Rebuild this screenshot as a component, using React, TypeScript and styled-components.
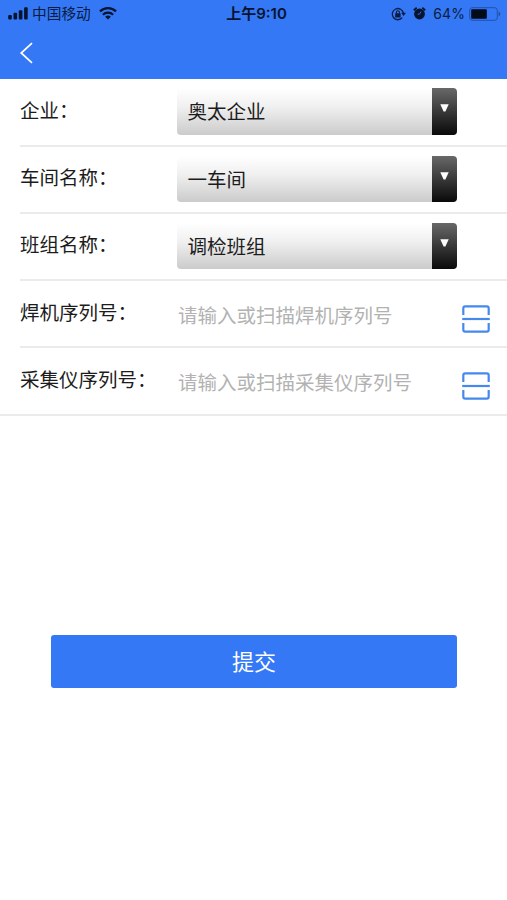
import React from 'react';
import styled, { createGlobalStyle } from 'styled-components';

const GlobalStyle = createGlobalStyle`
  * { box-sizing: border-box; }
  body {
    margin: 0;
    background: #fff;
    font-family: "Liberation Sans", "Noto Sans CJK SC", sans-serif;
    color: #1c1c1c;
  }
`;

const Screen = styled.main`
  display: flex;
  flex-direction: column;
  width: 507px;
  height: 900px;
  overflow: hidden;
  background: #fff;
`;

const Header = styled.header`
  height: 79px;
  flex: none;
  background: #3478f6;
`;

const StatusBar = styled.div`
  display: grid;
  grid-template-columns: 1fr auto 1fr;
  align-items: center;
  height: 27px;
  padding: 0 6px 0 8px;
  color: #0a1c42;
  font-family: Inter, "Noto Sans CJK SC", sans-serif;
  font-size: 14.7px;
  line-height: 27px;
`;

const StatusGroup = styled.div<{ $end?: boolean }>`
  display: flex;
  align-items: center;
  justify-content: ${(p) => (p.$end ? 'flex-end' : 'flex-start')};
  white-space: nowrap;

  svg { flex: none; display: block; }
`;

const Carrier = styled.span`
  margin: 0 8px 0 4px;
  padding-top: 2px;
  line-height: 25px;
`;

const Clock = styled.time`
  font-size: 15px;
  font-weight: 600;
  color: #07142f;
  margin-left: 4px;
`;

const Alarm = styled.span`
  margin: 0 7px 0 7px;
`;

const Percent = styled.span`
  margin-right: 4px;
  font-size: 14px;
  letter-spacing: 0.1px;
`;

const BackButton = styled.button`
  display: block;
  width: 40px;
  height: 52px;
  padding: 0 0 0 19px;
  border: 0;
  background: none;

  svg { display: block; }
`;

const Form = styled.form`
  display: flex;
  flex-direction: column;
`;

const Fields = styled.div`
  height: 336.5px;
  padding: 0.6px 0 0 20px;
  border-bottom: 2px solid #ebebeb;
`;

const Row = styled.div`
  display: flex;
  height: 67.2px;
  border-bottom: 2px solid #ebebeb;

  &:last-child { border-bottom: 0; }
`;

const Label = styled.label`
  width: 157px;
  flex: none;
  padding-top: 17.4px;
  font-size: 19.5px;
  line-height: 28px;
  white-space: nowrap;
`;

const SelectBox = styled.button`
  display: flex;
  width: 280px;
  height: 46.5px;
  margin-top: 8.9px;
  padding: 0;
  border: 0;
  border-radius: 4px;
  overflow: hidden;
  background: linear-gradient(#fff 0%, #f0f0f0 40%, #cbcbcb 100%);
  color: #1c1c1c;
  font: inherit;
  font-size: 19.5px;
  text-align: left;
`;

const SelectValue = styled.span`
  flex: 1;
  padding: 1px 0 0 10.5px;
  line-height: 46.5px;
`;

const SelectArrow = styled.span`
  display: flex;
  justify-content: center;
  width: 25px;
  height: 46.5px;
  padding: 16px 1px 0 0;
  background: linear-gradient(#686868, #090909);
`;

const Input = styled.input`
  width: 270px;
  height: 50px;
  margin: 10.4px 0 0 1px;
  padding: 0;
  border: 0;
  outline: 0;
  background: none;
  font: inherit;
  font-size: 19.5px;

  &::placeholder { color: #b2b2b2; opacity: 1; }
`;

const ScanButton = styled.button`
  width: 28px;
  height: 28px;
  margin: 23.6px 0 0 13.5px;
  padding: 0;
  border: 0;
  background: none;

  svg { display: block; }
`;

const Submit = styled.button`
  width: 405.6px;
  height: 53px;
  margin: 219.4px 0 0 51.2px;
  padding: 3px 0 0;
  border: 0;
  border-radius: 3px;
  background: #3478f6;
  color: #fff;
  font: inherit;
  font-size: 22px;
  line-height: 49px;
`;

const SignalIcon = () => (
  <svg width="20" height="13" viewBox="0 0 20 13" fill="#07142f">
    <rect x="0.2" y="8" width="3.6" height="4.6" rx="1" />
    <rect x="5.5" y="5.8" width="3.6" height="6.8" rx="1" />
    <rect x="10.8" y="3.2" width="3.6" height="9.4" rx="1" />
    <rect x="16.1" y="0.3" width="3.6" height="12.3" rx="1" />
  </svg>
);

const WifiIcon = () => (
  <svg width="18" height="13" viewBox="0 0 18 13" fill="none" stroke="#07142f">
    <path d="M1 4.4A11.6 11.6 0 0 1 17 4.4" strokeWidth="2.3" />
    <path d="M3.9 7.7A7.3 7.3 0 0 1 14.1 7.7" strokeWidth="2.2" />
    <path d="M9 12.6L6.1 9.8A4.2 4.2 0 0 1 11.9 9.8Z" fill="#07142f" stroke="none" />
  </svg>
);

const RotationLockIcon = () => (
  <svg width="15" height="14" viewBox="0 0 15 14" fill="none" stroke="#0a1c42">
    <path d="M11.2 10.7A5.6 5.6 0 1 1 12.4 6.2" strokeWidth="1.3" />
    <path d="M10.2 5.8H15L12.6 8.9Z" fill="#0a1c42" stroke="none" />
    <rect x="4.2" y="6.3" width="5.4" height="4.1" rx="0.5" fill="#0a1c42" stroke="none" />
    <path d="M5.4 6.5V5.2a1.5 1.5 0 0 1 3 0v1.3" strokeWidth="1.1" />
  </svg>
);

const AlarmIcon = () => (
  <svg width="13" height="13" viewBox="0 0 13 13" fill="none">
    <circle cx="6.5" cy="7" r="5.4" fill="#07142f" />
    <path d="M0.8 3.2L3.7 0.8M12.2 3.2L9.3 0.8" stroke="#07142f" strokeWidth="1.8" />
    <path d="M8 4.6L6.5 7.2H4.6" stroke="#3478f6" strokeWidth="0.9" />
  </svg>
);

const BatteryIcon = () => (
  <svg width="32" height="14" viewBox="0 0 32 14">
    <rect x="0.7" y="0.7" width="27.6" height="12.6" rx="2.6" fill="none" stroke="#214c9e" strokeWidth="0.9" />
    <rect x="2.2" y="2.2" width="15.6" height="9.6" rx="0.8" fill="#030a18" />
    <path d="M29.6 4.6Q31.3 5.5 31.3 7T29.6 9.4Z" fill="#214c9e" />
  </svg>
);

const BackIcon = () => (
  <svg width="15" height="22" viewBox="0 0 15 22" fill="none" stroke="#fff" strokeWidth="1.7">
    <path d="M13 1.2L2.2 11L13 20.8" />
  </svg>
);

const ScanIcon = () => (
  <svg width="28" height="28" viewBox="0 0 28 28" fill="none" stroke="#4689ec" strokeWidth="2.2">
    <path d="M1.3 10V3.3Q1.3 1.4 3.2 1.4H24.8Q26.7 1.4 26.7 3.3V10" />
    <path d="M0.2 14H27.8" />
    <path d="M1.3 18V24.7Q1.3 26.6 3.2 26.6H24.8Q26.7 26.6 26.7 24.7V18" />
  </svg>
);

const DownIcon = () => (
  <svg width="9" height="8" viewBox="0 0 9 8">
    <path d="M0.3 0.3H8.7L5.4 7.6H3.6Z" fill="#fff" />
  </svg>
);

const selects = [
  { id: 'company', label: '企业：', value: '奥太企业' },
  { id: 'workshop', label: '车间名称：', value: '一车间' },
  { id: 'team', label: '班组名称：', value: '调检班组' },
];

const inputs = [
  { id: 'welder', label: '焊机序列号：', placeholder: '请输入或扫描焊机序列号' },
  { id: 'collector', label: '采集仪序列号：', placeholder: '请输入或扫描采集仪序列号' },
];

export default function App() {
  return (
    <Screen lang="zh-CN">
      <GlobalStyle />
      <Header>
        <StatusBar>
          <StatusGroup>
            <SignalIcon />
            <Carrier>中国移动</Carrier>
            <WifiIcon />
          </StatusGroup>
          <Clock>上午9:10</Clock>
          <StatusGroup $end>
            <RotationLockIcon />
            <Alarm><AlarmIcon /></Alarm>
            <Percent>64%</Percent>
            <BatteryIcon />
          </StatusGroup>
        </StatusBar>
        <BackButton type="button" aria-label="返回"><BackIcon /></BackButton>
      </Header>
      <Form>
        <Fields>
          {selects.map((f) => (
            <Row key={f.id}>
              <Label htmlFor={f.id}>{f.label}</Label>
              <SelectBox id={f.id} type="button">
                <SelectValue>{f.value}</SelectValue>
                <SelectArrow><DownIcon /></SelectArrow>
              </SelectBox>
            </Row>
          ))}
          {inputs.map((f) => (
            <Row key={f.id}>
              <Label htmlFor={f.id}>{f.label}</Label>
              <Input id={f.id} placeholder={f.placeholder} />
              <ScanButton type="button" aria-label="扫描"><ScanIcon /></ScanButton>
            </Row>
          ))}
        </Fields>
        <Submit type="button">提交</Submit>
      </Form>
    </Screen>
  );
}
